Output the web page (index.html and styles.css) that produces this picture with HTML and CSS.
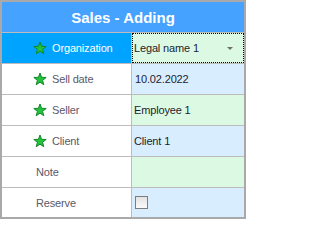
FILE: index.html
```html
<!DOCTYPE html>
<html>
<head>
<meta charset="utf-8">
<link rel="stylesheet" href="styles.css">
</head>
<body>
<div class="panel">
  <div class="form">
    <div class="header">Sales - Adding</div>

    <div class="label active"><svg class="star" viewBox="0 0 14 14"><polygon points="7,1 8.59,5.32 13.18,5.49 9.57,8.33 10.82,12.76 7,10.2 3.18,12.76 4.43,8.33 0.82,5.49 5.41,5.32"/></svg><span>Organization</span></div>
    <div class="value green focus"><span>Legal name 1</span><span class="arrow"></span></div>

    <div class="label"><svg class="star" viewBox="0 0 14 14"><polygon points="7,1 8.59,5.32 13.18,5.49 9.57,8.33 10.82,12.76 7,10.2 3.18,12.76 4.43,8.33 0.82,5.49 5.41,5.32"/></svg><span>Sell date</span></div>
    <div class="value blue"><span class="date">10.02.2022</span></div>

    <div class="label"><svg class="star" viewBox="0 0 14 14"><polygon points="7,1 8.59,5.32 13.18,5.49 9.57,8.33 10.82,12.76 7,10.2 3.18,12.76 4.43,8.33 0.82,5.49 5.41,5.32"/></svg><span>Seller</span></div>
    <div class="value green"><span>Employee 1</span></div>

    <div class="label"><svg class="star" viewBox="0 0 14 14"><polygon points="7,1 8.59,5.32 13.18,5.49 9.57,8.33 10.82,12.76 7,10.2 3.18,12.76 4.43,8.33 0.82,5.49 5.41,5.32"/></svg><span>Client</span></div>
    <div class="value blue"><span>Client 1</span></div>

    <div class="label plain"><span>Note</span></div>
    <div class="value green"></div>

    <div class="label plain"><span>Reserve</span></div>
    <div class="value blue"><span class="check"></span></div>
  </div>
</div>
</body>
</html>
```
FILE: styles.css
```css
html, body {
  margin: 0;
  padding: 0;
  background: #ffffff;
}
.panel {
  width: 246px;
  height: 219px;
  box-sizing: border-box;
  border: 2px solid #a9a9a9;
  font-family: "Liberation Sans", Arial, sans-serif;
  font-size: 11px;
}
.form {
  display: grid;
  grid-template-columns: 129px 112px;
  grid-template-rows: 30px repeat(5, 30px) 29px;
  gap: 1px;
  background: #bcbcbc;
  height: 215px;
}
.header {
  grid-column: 1 / 3;
  background: #45a2ff;
  color: #ffffff;
  font-weight: bold;
  font-size: 15px;
  display: flex;
  align-items: center;
  justify-content: center;
  padding-top: 1px;
}
.label {
  background: #ffffff;
  display: flex;
  align-items: center;
  gap: 5px;
  padding-left: 31px;
  color: #59596a;
  letter-spacing: -0.15px;
}
.label.plain {
  padding-left: 34px;
}
.label.active {
  background: #00a3ff;
  color: #ffffff;
}
.star {
  width: 14px;
  height: 14px;
  flex: none;
}
.star polygon {
  fill: #22c23a;
  stroke: #14872a;
  stroke-width: 1;
  stroke-linejoin: round;
}
.value {
  display: flex;
  align-items: center;
  justify-content: space-between;
  padding-left: 2px;
  padding-right: 11px;
  color: #1c1c30;
  letter-spacing: -0.15px;
}
.value .date {
  padding-left: 1px;
}
.green {
  background: #dcfae3;
}
.blue {
  background: #d8eeff;
}
.focus {
  outline: 1px dotted #000000;
  outline-offset: -1px;
}
.arrow {
  width: 0;
  height: 0;
  border-left: 3px solid transparent;
  border-right: 3px solid transparent;
  border-top: 3px solid #6f6f6f;
  margin-top: 1px;
}
.check {
  width: 11px;
  height: 11px;
  margin-left: 1px;
  border: 1px solid #7d7d7d;
  background: linear-gradient(#e2e2e2, #fbfbfb);
}
```
